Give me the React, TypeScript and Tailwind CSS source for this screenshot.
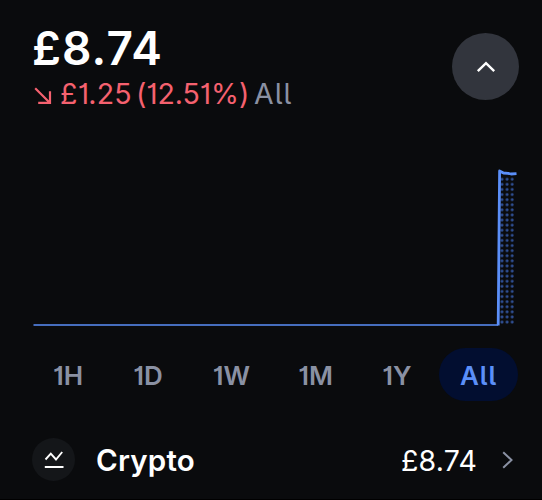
import React from "react";

const ranges = [
  { label: "1H", style: "w-[70px]" },
  { label: "1D", style: "w-[90px]" },
  { label: "1W", style: "w-[77px]" },
  { label: "1M", style: "w-[91px]" },
  { label: "1Y", style: "w-[72px]" },
];

const Header = () => {
  return (
    <header className="flex h-[132px] justify-between pt-[25px] pr-[23px] pl-[32px]">
      <div>
        <h1 className="h-[46px] text-[46px] leading-[46px] font-semibold tracking-[1.1px] text-white">
          £8.74
        </h1>
        <div className="mt-[5px] flex h-[36px] items-center text-[28.5px] leading-[36px] text-[#f5616f]">
          <svg className="mt-[3px] mr-[8px] ml-[2px] h-[18px] w-[18px]" viewBox="0 0 18 18" fill="none" stroke="currentColor" strokeWidth="2.2">
            <path d="M1.2 1.2L15 15M16 4.2V15.8H4.2" />
          </svg>
          <span className="w-[76px] tracking-[0.3px]">£1.25</span>
          <span className="w-[118px] tracking-[-0.1px]">(12.51%)</span>
          <span className="tracking-[1px] text-[#8a91a3]">All</span>
        </div>
      </div>
      <button className="mt-[8px] flex h-[67px] w-[67px] items-center justify-center rounded-full bg-[#32353d] text-white" aria-label="Collapse">
        <svg className="h-[12px] w-[20px]" viewBox="0 0 20 12" fill="none" stroke="currentColor" strokeWidth="2.4">
          <path d="M1.8 10.2L10 2.2L18.2 10.2" />
        </svg>
      </button>
    </header>
  );
};

const Chart = () => {
  return (
    <svg className="block h-[200px] w-[542px]" viewBox="0 132 542 200" fill="none">
      <defs>
        <pattern id="dots" x="499.5" y="176.7" width="5.1" height="5.1" patternUnits="userSpaceOnUse">
          <circle cx="2.5" cy="2.5" r="1.5" fill="#2f4f94" />
        </pattern>
      </defs>
      <rect x="499.5" y="176.7" width="15.3" height="147.9" fill="url(#dots)" />
      <path d="M33.5 325H498" stroke="#5b8ff9" strokeWidth="1.7" />
      <path d="M498.2 325.6L499.6 171L503.5 173L508 173.4L511 174L516.5 173.6" stroke="#5b8ff9" strokeWidth="2.8" strokeLinejoin="round" />
    </svg>
  );
};

const RangeTabs = () => {
  return (
    <nav className="mt-[15px] flex h-[54px] items-center pl-[33px] text-[26px] font-semibold text-[#8a91a3]">
      {ranges.map((r) => (
        <button key={r.label} className={`${r.style} pt-[2px] text-center`}>
          {r.label}
        </button>
      ))}
      <button className="ml-[6px] h-[53px] w-[79px] rounded-full bg-[#020e30] pt-[2px] tracking-[0.9px] text-[#5b8ff9]">All</button>
    </nav>
  );
};

const AssetRow = () => {
  return (
    <div className="mt-[37px] flex h-[43px] items-center pr-[28px] pl-[32px] text-[28.5px] text-white">
      <div className="flex h-[43px] w-[43px] items-center justify-center rounded-full bg-[#141619]">
        <svg className="h-[19px] w-[20px]" viewBox="0 0 20 19" fill="none" stroke="currentColor" strokeWidth="1.9">
          <path d="M1.5 9.5L6.8 3.6L12 9.5L18.2 2M0.8 17H19.5" />
        </svg>
      </div>
      <span className="ml-[21px] pt-[1px] text-[29.5px] font-semibold tracking-[0.2px]">Crypto</span>
      <span className="ml-auto pt-[3px] tracking-[0.2px]">£8.74</span>
      <svg className="ml-[25px] h-[18px] w-[12px] text-[#8a91a3]" viewBox="0 0 12 18" fill="none" stroke="currentColor" strokeWidth="2">
        <path d="M1.2 1.2L9.5 9L1.2 16.8" />
      </svg>
    </div>
  );
};

function App() {
  return (
    <main className="h-[500px] w-[542px] overflow-hidden border-b border-black bg-[#0a0b0d] font-['Inter',sans-serif] whitespace-nowrap [font-feature-settings:'cv01','cv05']">
      <Header />
      <Chart />
      <RangeTabs />
      <AssetRow />
    </main>
  );
}

export default App;
